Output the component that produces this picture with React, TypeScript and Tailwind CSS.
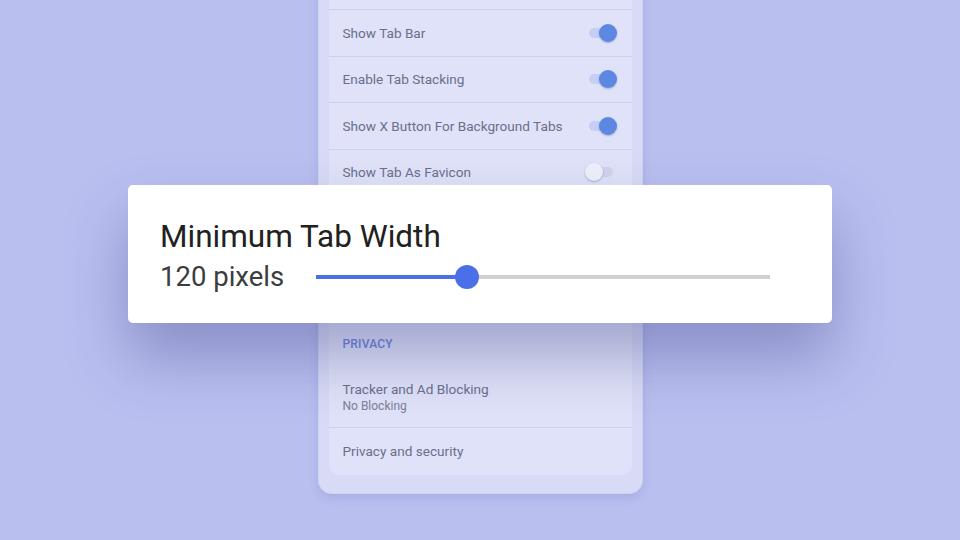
import React from "react";

function Toggle({ on }: { on: boolean }) {
  return (
    <div className="relative w-[32px] h-[20px] shrink-0">
      <div
        className={
          "absolute left-[4px] right-[4px] top-[5px] h-[10px] rounded-full " +
          (on ? "bg-[#c5cff5]" : "bg-[#d0d3ef]")
        }
      />
      <div
        className={
          "absolute top-[1px] w-[18px] h-[18px] rounded-full shadow-[0_1px_2px_rgba(40,50,110,0.3)] " +
          (on ? "right-0 bg-[#5d88e2]" : "left-0 bg-[#eef0fb]")
        }
      />
    </div>
  );
}

function ToggleRow({ label, on }: { label: string; on: boolean }) {
  return (
    <div className="h-[46.5px] border-b border-[#cdd1ef] flex items-center justify-between pl-[14px] pr-[15px]">
      <span className="text-[13.6px] text-[#6b6f8c]">{label}</span>
      <Toggle on={on} />
    </div>
  );
}

export default function App() {
  return (
    <div
      className="relative w-[960px] h-[540px] overflow-hidden bg-[#b9bfef]"
      style={{ fontFamily: "Roboto, 'Noto Sans', sans-serif" }}
    >
      <div className="mx-auto w-[325px] mt-[-46.5px] pt-[10px] pb-[18px] px-[10px] bg-[#d8dbf5] rounded-b-[14px] border border-t-0 border-[#cfd3f1] shadow-[0_4px_10px_rgba(70,80,160,0.15)]">
        <div className="bg-[#dfe2f8] rounded-[10px] flex flex-col">
          <div className="h-[46.5px] border-b border-[#cdd1ef]" />
          <ToggleRow label="Show Tab Bar" on={true} />
          <ToggleRow label="Enable Tab Stacking" on={true} />
          <ToggleRow label="Show X Button For Background Tabs" on={true} />
          <ToggleRow label="Show Tab As Favicon" on={false} />
          <div className="h-[125px]" />
          <div className="h-[45px] flex items-center pl-[14px]">
            <span className="text-[12px] font-medium text-[#6f86da] tracking-[0.2px]">PRIVACY</span>
          </div>
          <div className="h-[62px] border-b border-[#cdd1ef] flex flex-col justify-center pl-[14px]">
            <span className="text-[13.6px] leading-[18px] text-[#6b6f8c]">Tracker and Ad Blocking</span>
            <span className="text-[12px] leading-[16px] text-[#7c809b]">No Blocking</span>
          </div>
          <div className="h-[47px] flex items-center pl-[14px]">
            <span className="text-[13.6px] text-[#6b6f8c]">Privacy and security</span>
          </div>
        </div>
      </div>

      <div className="absolute left-[128px] top-[185px] w-[704px] h-[138px] bg-white rounded-[5px] shadow-[0_34px_60px_rgba(50,55,125,0.35)] pl-[32px] pt-[34px] flex flex-col gap-[6px]">
        <div className="text-[31.5px] leading-[36px] text-[#212121]">Minimum Tab Width</div>
        <div className="flex items-center h-[32px]">
          <div className="w-[156px] text-[27.5px] leading-[32px] text-[#3d3d3d]">120 pixels</div>
          <div className="relative w-[454px] h-[24px] flex items-center">
            <div className="absolute left-0 right-0 top-[10px] h-[4px] bg-[#d0d0d0]" />
            <div className="absolute left-0 w-[151px] top-[10px] h-[4px] bg-[#4b6fe8]" />
            <div className="absolute left-[139px] top-0 w-[24px] h-[24px] rounded-full bg-[#4b6fe8]" />
          </div>
        </div>
      </div>
    </div>
  );
}
